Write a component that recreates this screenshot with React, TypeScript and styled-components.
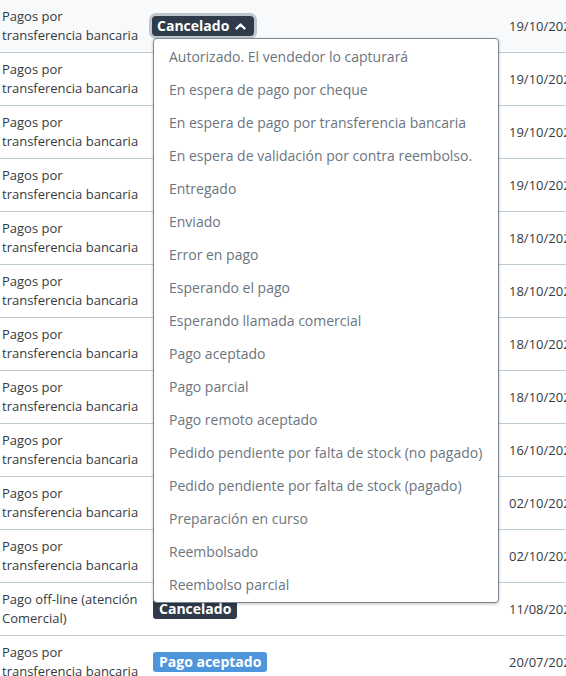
import { createGlobalStyle } from "styled-components";
import styled from "styled-components";

const GlobalStyle = createGlobalStyle`
  html, body {
    margin: 0;
    padding: 0;
    background: #ffffff;
    font-family: "Open Sans", "Noto Sans", sans-serif;
    overflow: hidden;
  }
`;

type Order = {
  payment: string;
  status: string;
  date: string;
};

//--------------------------------------------------------------------------

const orders: Order[] = [
  { payment: "Pagos por transferencia bancaria", status: "Cancelado", date: "19/10/2024" },
  { payment: "Pagos por transferencia bancaria", status: "", date: "19/10/2024" },
  { payment: "Pagos por transferencia bancaria", status: "", date: "19/10/2024" },
  { payment: "Pagos por transferencia bancaria", status: "", date: "19/10/2024" },
  { payment: "Pagos por transferencia bancaria", status: "", date: "18/10/2024" },
  { payment: "Pagos por transferencia bancaria", status: "", date: "18/10/2024" },
  { payment: "Pagos por transferencia bancaria", status: "", date: "18/10/2024" },
  { payment: "Pagos por transferencia bancaria", status: "", date: "18/10/2024" },
  { payment: "Pagos por transferencia bancaria", status: "", date: "16/10/2024" },
  { payment: "Pagos por transferencia bancaria", status: "", date: "02/10/2024" },
  { payment: "Pagos por transferencia bancaria", status: "", date: "02/10/2024" },
  { payment: "Pago off-line (atención Comercial)", status: "Cancelado", date: "11/08/2024" },
  { payment: "Pagos por transferencia bancaria", status: "Pago aceptado", date: "20/07/2024" },
];

const statuses = [
  "Autorizado. El vendedor lo capturará",
  "En espera de pago por cheque",
  "En espera de pago por transferencia bancaria",
  "En espera de validación por contra reembolso.",
  "Entregado",
  "Enviado",
  "Error en pago",
  "Esperando el pago",
  "Esperando llamada comercial",
  "Pago aceptado",
  "Pago parcial",
  "Pago remoto aceptado",
  "Pedido pendiente por falta de stock (no pagado)",
  "Pedido pendiente por falta de stock (pagado)",
  "Preparación en curso",
  "Reembolsado",
  "Reembolso parcial",
];

const badgeColors: Record<string, string> = {
  Cancelado: "#2f3a4a",
  "Pago aceptado": "#4e96dc",
};

//--------------------------------------------------------------------------

const ChevronUp = () => (
  <svg width="11" height="8" viewBox="0 0 11 8" aria-hidden>
    <path d="M1.5 6.5 L5.5 2.5 L9.5 6.5" fill="none" stroke="#fff" strokeWidth="2.4" strokeLinecap="round" strokeLinejoin="round" />
  </svg>
);

export default function App() {
  return (
    <>
      <GlobalStyle />
      <Table>
        {orders.map((order, i) => (
          <Row key={i} $active={i === 0}>
            <PaymentCell>{order.payment}</PaymentCell>
            <StatusCell>
              {i === 0 ? (
                <DropdownWrap>
                  <Toggle $color={badgeColors[order.status]}>
                    {order.status}
                    <ChevronUp />
                  </Toggle>
                  <Menu>
                    {statuses.map(s => (
                      <MenuItem key={s}>{s}</MenuItem>
                    ))}
                  </Menu>
                </DropdownWrap>
              ) : order.status ? (
                <Badge $color={badgeColors[order.status]}>{order.status}</Badge>
              ) : null}
            </StatusCell>
            <DateCell>{order.date}</DateCell>
          </Row>
        ))}
      </Table>
    </>
  );
}

const Table = styled.div`
  width: 640px;
  display: flex;
  flex-direction: column;
`;

const Row = styled.div<{ $active?: boolean }>`
  display: grid;
  grid-template-columns: 151px 356px auto;
  align-items: center;
  height: 52px;
  border-bottom: 1px solid #bccbd2;
  background: ${p => (p.$active ? "#f8f9fb" : "#ffffff")};
  padding-left: 2px;
  color: #363a41;
  font-size: 13px;
  line-height: 19px;
`;

const PaymentCell = styled.div`
  padding-right: 10px;
`;

const StatusCell = styled.div`
  display: flex;
  align-items: center;
`;

const DateCell = styled.div`
  white-space: nowrap;
`;

const Badge = styled.span<{ $color: string }>`
  display: inline-flex;
  align-items: center;
  gap: 6px;
  height: 20px;
  padding: 0 6px;
  border-radius: 3px;
  background: ${p => p.$color};
  color: #ffffff;
  font-weight: 700;
  font-size: 14px;
  line-height: 20px;
`;

const DropdownWrap = styled.div`
  position: relative;
`;

const Toggle = styled(Badge)`
  margin-left: -1px;
  box-shadow: 0 0 0 3px #bfc6ce;
  border-radius: 4px;
  padding: 0 8px 0 5px;
`;

const Menu = styled.div`
  position: absolute;
  top: 22px;
  left: 0;
  width: 346px;
  padding: 1px 0;
  background: #ffffff;
  border: 1px solid #7b8894;
  border-radius: 4px;
  box-shadow: 0 1px 3px rgba(0, 0, 0, 0.25);
  z-index: 10;
  box-sizing: border-box;
`;

const MenuItem = styled.div`
  height: 33px;
  display: flex;
  align-items: center;
  padding-left: 15px;
  color: #6c7580;
  font-size: 14px;
  white-space: nowrap;
`;
